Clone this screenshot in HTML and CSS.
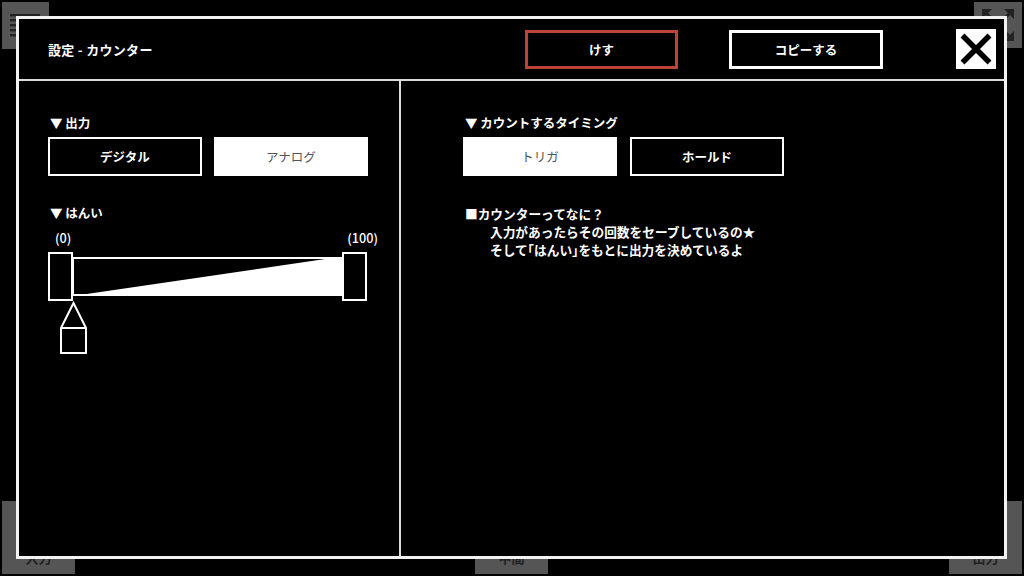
FILE: index.html
```html
<!DOCTYPE html>
<html lang="ja">
<head>
<meta charset="utf-8">
<title>設定 - カウンター</title>
<link rel="stylesheet" href="styles.css">
</head>
<body>
<div class="canvas">
  <div class="node node-menu">
    <svg class="node-icon" width="47" height="47" viewBox="0 0 47 47">
      <g fill="#222">
        <rect x="8" y="12" width="30" height="2.4"/>
        <rect x="8" y="17" width="30" height="2.4"/>
        <rect x="8" y="22" width="30" height="2.4"/>
        <rect x="8" y="27" width="30" height="2.4"/>
        <rect x="8" y="32" width="30" height="2.4"/>
      </g>
    </svg>
  </div>
  <div class="node node-full">
    <svg class="node-icon" width="48" height="46" viewBox="0 0 48 46">
      <g fill="#222">
        <polygon points="8,7 18,7 8,17"/>
        <polygon points="40,7 30,7 40,17"/>
        <polygon points="40,39 30,39 40,29"/>
        <polygon points="8,39 18,39 8,29"/>
      </g>
      <g stroke="#222" stroke-width="3">
        <line x1="11" y1="10" x2="19" y2="18"/>
        <line x1="37" y1="10" x2="29" y2="18"/>
        <line x1="37" y1="36" x2="29" y2="28"/>
        <line x1="11" y1="36" x2="19" y2="28"/>
      </g>
    </svg>
  </div>
  <div class="node node-in"><span class="node-label">入力</span></div>
  <div class="node node-mid"><span class="node-label">中間</span></div>
  <div class="node node-out"><span class="node-label">出力</span></div>
</div>

<div class="dialog">
  <header class="dlg-head">
    <div class="dlg-title">設定 - カウンター</div>
    <button class="btn btn-danger">けす</button>
    <button class="btn btn-copy">コピーする</button>
    <button class="btn-close" aria-label="close">
      <svg width="40" height="40" viewBox="0 0 40 40">
        <rect width="40" height="40" fill="#fff"/>
        <g stroke="#000" stroke-width="5.5">
          <line x1="6.5" y1="6.5" x2="33.5" y2="33.5"/>
          <line x1="33.5" y1="6.5" x2="6.5" y2="33.5"/>
        </g>
      </svg>
    </button>
  </header>
  <div class="dlg-body">
    <section class="col col-left">
      <h2 class="sec-title">▼ 出力</h2>
      <div class="opts">
        <button class="opt">デジタル</button>
        <button class="opt opt-on">アナログ</button>
      </div>
      <h2 class="sec-title sec-gap">▼ はんい</h2>
      <div class="range">
        <div class="range-labels">
          <span>(0)</span>
          <span>(100)</span>
        </div>
        <svg class="range-svg" width="320" height="103" viewBox="0 0 320 103">
          <polygon points="25,44 284,6 294,6 294,44" fill="#fff"/>
          <g fill="none" stroke="#fff" stroke-width="2">
            <rect x="25" y="6" width="269" height="37"/>
            <rect x="1" y="1" width="23" height="47" fill="#000"/>
            <rect x="295" y="1" width="23" height="47" fill="#000"/>
            <polygon points="25.5,51 38,76 38,101 13,101 13,76"/>
            <line x1="13" y1="76" x2="38" y2="76"/>
          </g>
        </svg>
      </div>
    </section>
    <section class="col col-right">
      <h2 class="sec-title">▼ カウントするタイミング</h2>
      <div class="opts opts-r">
        <button class="opt opt-on">トリガ</button>
        <button class="opt">ホールド</button>
      </div>
      <div class="help">
        <p class="help-q">■カウンターってなに？</p>
        <p class="help-a">入力があったらその回数をセーブしているの★</p>
        <p class="help-a">そして<span class="half">「</span>はんい<span class="half">」</span>をもとに出力を決めているよ</p>
      </div>
    </section>
  </div>
</div>
</body>
</html>
```

FILE: styles.css
```css
html, body {
  margin: 0;
  padding: 0;
}
body {
  width: 1024px;
  height: 576px;
  overflow: hidden;
  background: #000;
  position: relative;
  font-family: "Noto Sans CJK JP", "Noto Sans", sans-serif;
  color: #fff;
  font-size: 12.5px;
}

/* background canvas nodes */
.canvas {
  position: absolute;
  inset: 0;
}
.node {
  position: absolute;
  background: #555;
  display: flex;
  flex-direction: column;
  align-items: center;
  justify-content: flex-end;
}
.node-icon { display: block; position: absolute; left: 0; top: 0; }
.node-menu { left: 2px; top: 2px; width: 47px; height: 47px; }
.node-full { left: 974px; top: 2px; width: 48px; height: 46px; }
.node-in  { left: 2px;   top: 501px; width: 73px; height: 73px; }
.node-mid { left: 475px; top: 501px; width: 73px; height: 73px; }
.node-out { left: 949px; top: 501px; width: 73px; height: 73px; }
.node-label {
  color: #222;
  font-size: 13px;
  line-height: 16px;
  padding-bottom: 8px;
  font-weight: 700;
}

/* dialog */
.dialog {
  position: absolute;
  left: 16px;
  top: 16px;
  width: 991px;
  height: 543px;
  box-sizing: border-box;
  border: 3px solid #f2f2f2;
  background: #000;
  display: flex;
  flex-direction: column;
}
.dlg-head {
  height: 60px;
  flex: none;
  border-bottom: 2px solid #dcdcdc;
  display: flex;
  align-items: center;
  padding: 0 8px 0 29px;
}
.dlg-title {
  flex: 1;
  font-size: 13px;
  font-weight: 700;
  letter-spacing: 0.3px;
}
button {
  font-family: inherit;
  font-size: 12.5px;
  margin: 0;
  padding: 0;
  background: none;
  border: none;
  color: inherit;
  cursor: pointer;
}
.btn {
  box-sizing: border-box;
  height: 39px;
  font-weight: 700;
  color: #fff;
  background: #000;
}
.btn-danger {
  width: 153px;
  border: 3px solid #bd4238;
}
.btn-copy {
  width: 154px;
  margin-left: 51px;
  border: 3px solid #fff;
}
.btn-close {
  width: 40px;
  height: 40px;
  margin-left: 73px;
  display: block;
}
.btn-close svg { display: block; }

.dlg-body {
  flex: 1;
  display: flex;
}
.col {
  padding-top: 34px;
  box-sizing: border-box;
}
.col-left {
  width: 382px;
  border-right: 2px solid #dcdcdc;
  padding-left: 29px;
}
.col-right {
  flex: 1;
  padding-left: 62px;
}
.sec-title {
  margin: 0 0 6px 2px;
  font-size: 12.5px;
  line-height: 16px;
  height: 16px;
  font-weight: 700;
}
.sec-gap { margin-top: 29px; }

.opts {
  display: flex;
  gap: 12px;
}
.opts-r { gap: 13px; }
.opt {
  box-sizing: border-box;
  width: 154px;
  height: 39px;
  border: 2px solid #fff;
  background: #000;
  color: #fff;
  font-weight: 700;
}
.opt-on {
  background: #fff;
  color: #555;
  font-weight: 400;
}

.range {
  width: 320px;
  margin-top: 9px;
}
.range-labels {
  display: flex;
  justify-content: space-between;
  padding-left: 7px;
  margin-right: -10px;
  font-size: 12.7px;
  line-height: 16px;
  font-weight: 500;
}
.range-svg {
  display: block;
  margin-top: 6px;
}

.help {
  margin-top: 29px;
  font-weight: 700;
  font-size: 12.7px;
  line-height: 18px;
}
.help p { margin: 0; }
.help-q { padding-left: 2px; }
.help-a { padding-left: 27px; }
.half { font-feature-settings: "halt"; }
```
